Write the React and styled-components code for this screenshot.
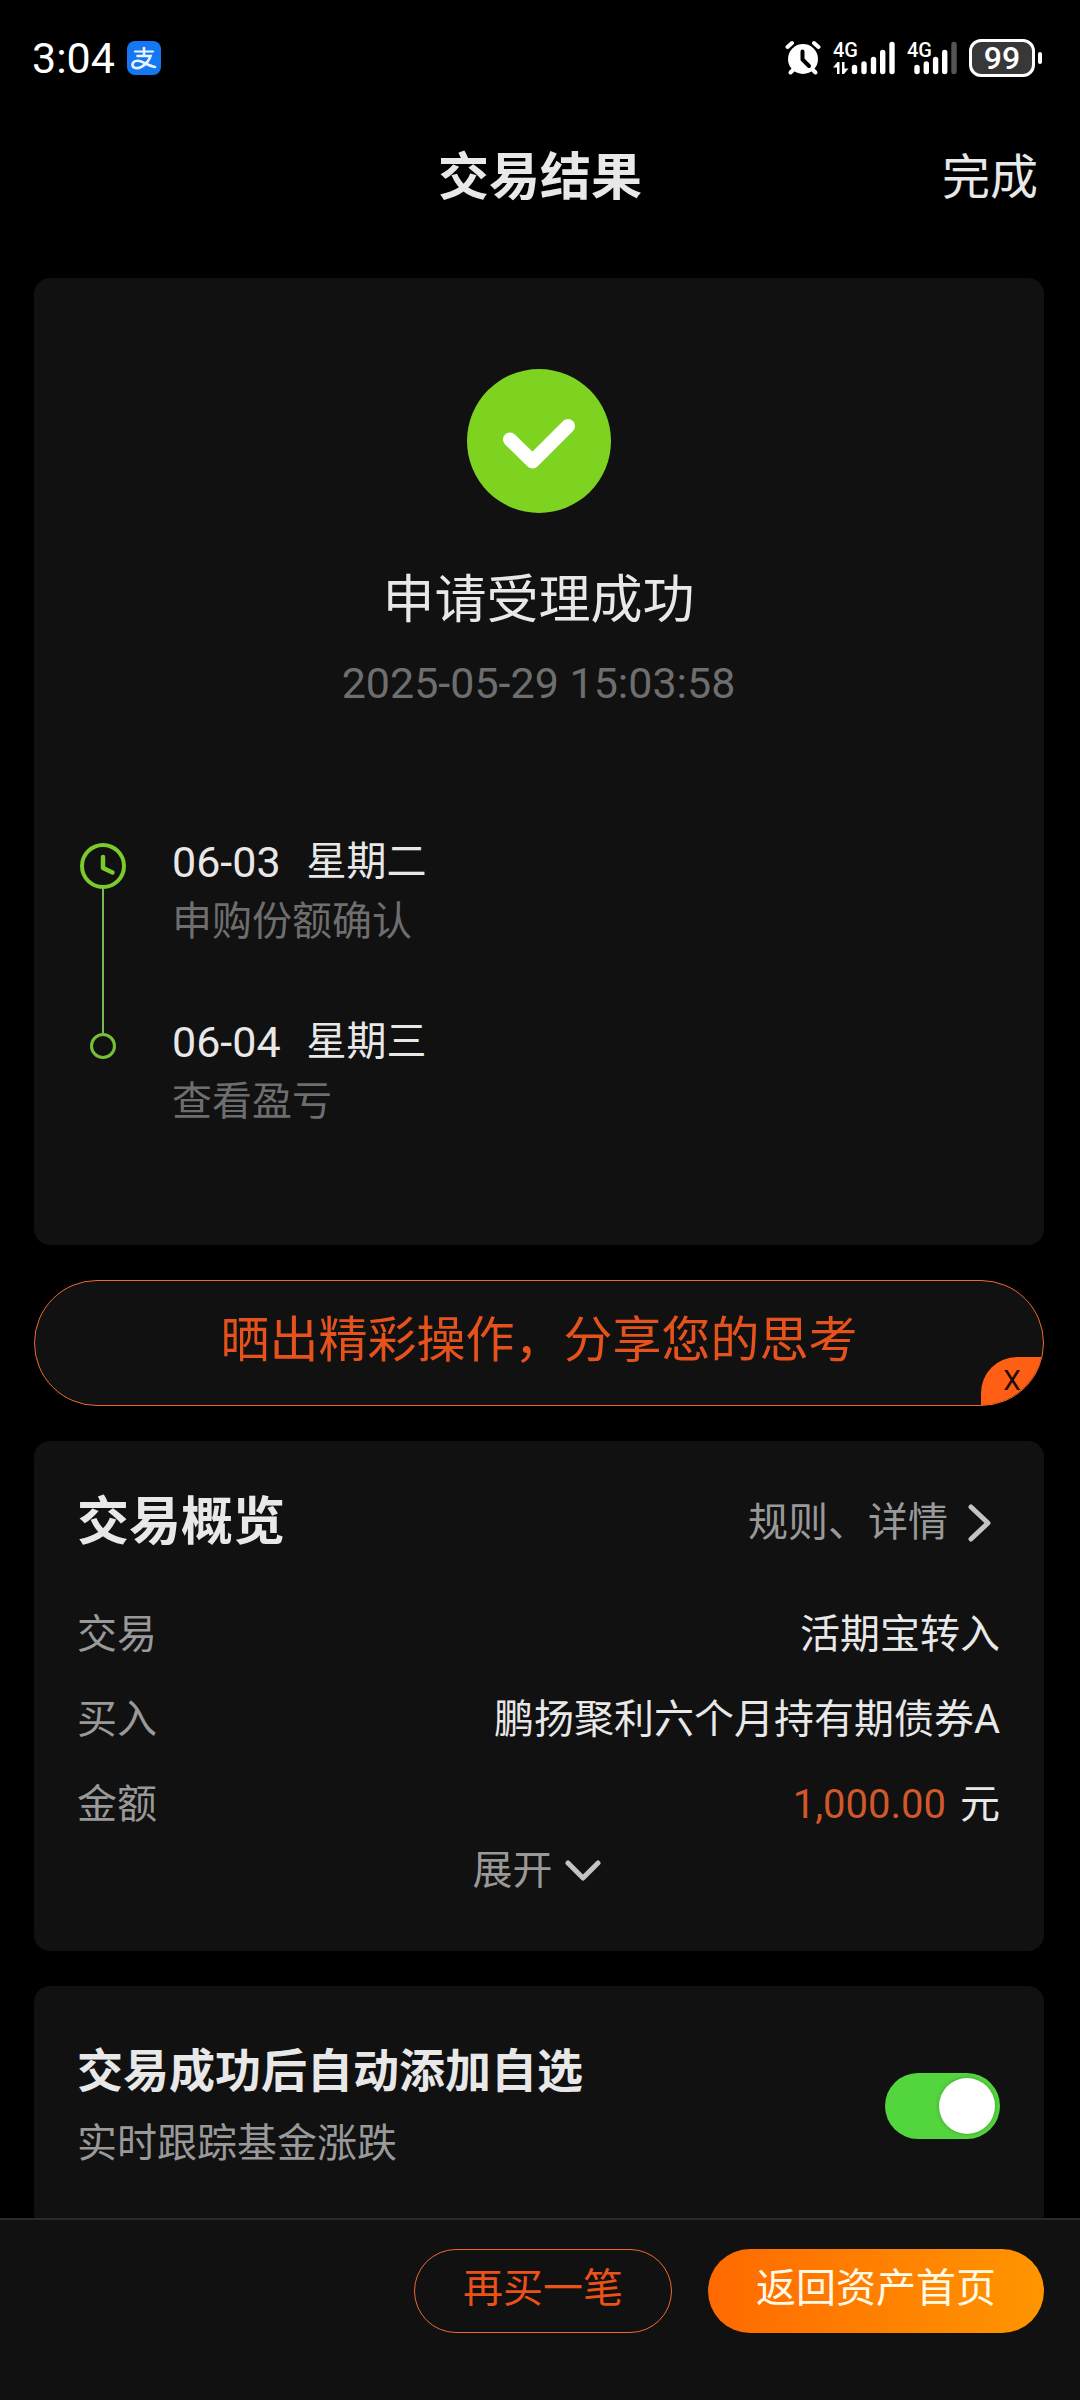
import React, { useState } from "react";
import styled, { createGlobalStyle } from "styled-components";

const steps = [
  { date: "06-03", weekday: "星期二", note: "申购份额确认", current: true },
  { date: "06-04", weekday: "星期三", note: "查看盈亏", current: false },
];

const Signal = ({ weak, data }) => (
  <SignalIcon viewBox={weak ? "0 -6 50 48" : "0 -6 62 48"} $weak={weak} aria-hidden="true">
    <text x="0" y="17" fill="#fff" fontSize="20" fontWeight="500">4G</text>
    {data && (
      <path
        d="M0 27.5 L4.5 22 H6.5 V34 H4 V27.5 Z M9 22 H11.5 V28.5 H15.5 L11 34 H9 Z"
        fill="#fff"
      />
    )}
    <g strokeWidth="5.4" strokeLinecap="round" stroke="#fff">
      <path d={data ? "M21.5 27.5V31.5" : "M10 27.5V31.5"} />
      <path d={data ? "M31 24V31.5" : "M19.3 24V31.5"} />
      <path d={data ? "M40.5 19.5V31.5" : "M28.6 19.5V31.5"} />
      <path d={data ? "M49.7 12.5V31.5" : "M37.7 12.5V31.5"} />
      <path d={data ? "M59 4.5V31.5" : "M47 4.5V31.5"} stroke={weak ? "#555" : "#fff"} />
    </g>
  </SignalIcon>
);

const App = () => {
  const [autoAdd, setAutoAdd] = useState(true);
  const [showBanner, setShowBanner] = useState(true);

  return (
    <Page>
      <GlobalStyle />

      <StatusBar>
        <StatusGroup>
          <Time>3:04</Time>
          <AppBadge viewBox="0 0 34 34" aria-hidden="true">
            <rect width="34" height="34" rx="8" fill="#1677f2" />
            <g fill="none" stroke="#e8f4ff" strokeLinecap="round">
              <path d="M17 7V14" strokeWidth="2.6" />
              <path d="M8 10.5H26" strokeWidth="2.2" />
              <path d="M10.5 15H23.5C22 19.5 18.5 23.5 14.5 25.8C10.5 28 5.5 27.5 5.5 23.8C5.5 20.2 10 18.6 14.5 20.6C18.5 22.4 23 25 28 26" strokeWidth="2.6" />
            </g>
          </AppBadge>
        </StatusGroup>
        <StatusGroup>
          <AlarmIcon viewBox="0 0 36 36" aria-hidden="true">
            <circle cx="18" cy="19" r="15" fill="#fff" />
            <g stroke="#fff" strokeWidth="4" strokeLinecap="round">
              <path d="M2.5 7 L7 3" />
              <path d="M33.5 7 L29 3" />
              <path d="M5.5 32.5 L9 29" />
              <path d="M30.5 32.5 L27 29" />
            </g>
            <path d="M17.5 11.5 V19.5 L24 26" fill="none" stroke="#000" strokeWidth="4" strokeLinecap="round" strokeLinejoin="round" />
          </AlarmIcon>
          <Signal data />
          <Signal weak />
          <Battery>99</Battery>
        </StatusGroup>
      </StatusBar>

      <Header>
        <PageTitle>交易结果</PageTitle>
        <DoneButton type="button">完成</DoneButton>
      </Header>

      <Content>
        <ResultCard>
          <SuccessIcon viewBox="0 0 144 144" aria-hidden="true">
            <circle cx="72" cy="72" r="72" fill="#7ed321" />
            <path d="M43 70.5 L65.5 92.5 L101 57" fill="none" stroke="#fff" strokeWidth="14" strokeLinecap="round" strokeLinejoin="round" />
          </SuccessIcon>
          <ResultText>申请受理成功</ResultText>
          <ResultTime>2025-05-29 15:03:58</ResultTime>

          <Timeline>
            {steps.map((step) => (
              <Step key={step.date} $current={step.current}>
                <Rail $current={step.current}>
                  {step.current ? (
                    <>
                      <ClockIcon viewBox="0 0 46 46" aria-hidden="true">
                        <circle cx="23" cy="23" r="21" fill="none" stroke="#7bcb2a" strokeWidth="4" />
                        <path d="M23 14V25L32.5 29.5" fill="none" stroke="#7bcb2a" strokeWidth="4.5" strokeLinecap="round" strokeLinejoin="round" />
                      </ClockIcon>
                      <RailLine />
                    </>
                  ) : (
                    <>
                      <RailStub />
                      <Dot />
                    </>
                  )}
                </Rail>
                <StepBody>
                  <StepDate>
                    <DateNumber>{step.date}</DateNumber>
                    <span>{step.weekday}</span>
                  </StepDate>
                  <StepNote>{step.note}</StepNote>
                </StepBody>
              </Step>
            ))}
          </Timeline>
        </ResultCard>

        {showBanner && (
          <Banner>
            <ShareButton type="button">晒出精彩操作，分享您的思考</ShareButton>
            <CloseButton type="button" onClick={() => setShowBanner(false)}>X</CloseButton>
          </Banner>
        )}

        <OverviewCard>
          <CardHeader>
            <CardTitle>交易概览</CardTitle>
            <RulesLink href="#rules">
              规则、详情
              <ChevronRight viewBox="0 0 24 38" aria-hidden="true">
                <path d="M3 3 L20 19 L3 35" />
              </ChevronRight>
            </RulesLink>
          </CardHeader>
          <Details>
            <DetailRow>
              <Label>交易</Label>
              <Value>活期宝转入</Value>
            </DetailRow>
            <DetailRow>
              <Label>买入</Label>
              <Value>鹏扬聚利六个月持有期债券A</Value>
            </DetailRow>
            <DetailRow>
              <Label>金额</Label>
              <Value>
                <Amount>1,000.00</Amount>
                <span>元</span>
              </Value>
            </DetailRow>
          </Details>
          <ExpandButton type="button">
            展开
            <ChevronDown viewBox="0 0 36 22" aria-hidden="true">
              <path d="M3 3 L18 18 L33 3" />
            </ChevronDown>
          </ExpandButton>
        </OverviewCard>

        <FavoriteCard>
          <FavoriteText htmlFor="auto-add">
            <FavoriteTitle>交易成功后自动添加自选</FavoriteTitle>
            <FavoriteNote>实时跟踪基金涨跌</FavoriteNote>
          </FavoriteText>
          <Switch
            id="auto-add"
            type="checkbox"
            checked={autoAdd}
            onChange={(e) => setAutoAdd(e.target.checked)}
          />
        </FavoriteCard>
      </Content>

      <Footer>
        <OutlineButton type="button">再买一笔</OutlineButton>
        <PrimaryButton type="button">返回资产首页</PrimaryButton>
      </Footer>
    </Page>
  );
};

// --- STYLES (dark theme) ---

const GlobalStyle = createGlobalStyle`
  * {
    box-sizing: border-box;
  }

  body {
    margin: 0;
    background: #000;
  }

  body, button, input {
    font-family: Roboto, "Noto Sans CJK SC", sans-serif;
  }

  button {
    padding: 0;
    border: none;
    background: none;
    cursor: pointer;
  }
`;

const Page = styled.div`
  height: 100vh;
  display: flex;
  flex-direction: column;
  color: #e8e8e8;
  font-size: 40px;
  line-height: 56px;
`;

const StatusBar = styled.div`
  display: flex;
  justify-content: space-between;
  align-items: center;
  padding: 30px 38px 30px 32px;
  color: #fff;
`;

const StatusGroup = styled.div`
  display: flex;
  align-items: center;
  gap: 12px;
`;

const Time = styled.span`
  font-size: 43px;
`;

const AppBadge = styled.svg`
  width: 34px;
  height: 34px;
`;

const AlarmIcon = styled.svg`
  width: 36px;
  height: 36px;
`;

const SignalIcon = styled.svg`
  width: ${(props) => (props.$weak ? "50px" : "62px")};
  height: 48px;
`;

const Battery = styled.span`
  position: relative;
  width: 66px;
  margin-right: 7px;
  border: 3px solid #fff;
  border-radius: 12px;
  background: #383838;
  font-size: 32px;
  font-weight: 500;
  line-height: 32px;
  text-align: center;

  &::after {
    content: "";
    position: absolute;
    top: 10px;
    right: -10px;
    width: 4px;
    height: 12px;
    border-radius: 2px;
    background: #fff;
  }
`;

const Header = styled.header`
  display: grid;
  grid-template-columns: 1fr auto 1fr;
  align-items: center;
  padding: 26px 42px;
`;

const PageTitle = styled.h1`
  grid-column: 2;
  margin: 0;
  font-size: 51px;
  font-weight: 700;
  line-height: 72px;
`;

const DoneButton = styled.button`
  justify-self: end;
  color: #e8e8e8;
  font-size: 48px;
  line-height: 72px;
`;

const Content = styled.main`
  flex: 1;
  min-height: 0;
  overflow-y: auto;
  scrollbar-width: none;
  display: flex;
  flex-direction: column;
  gap: 35px;
  padding: 38px 36px 35px 34px;

  & > * {
    flex-shrink: 0;
  }
`;

const Card = styled.section`
  border-radius: 16px;
  background: #111;
`;

const ResultCard = styled(Card)`
  display: flex;
  flex-direction: column;
  align-items: center;
  padding: 91px 46px 115px 45px;
`;

const SuccessIcon = styled.svg`
  width: 144px;
  height: 144px;
`;

const ResultText = styled.h2`
  margin: 52px 0 0;
  font-size: 52px;
  font-weight: 400;
  line-height: 72px;
`;

const ResultTime = styled.time`
  margin-top: 18px;
  color: #6e6e6e;
  font-size: 43px;
`;

const Timeline = styled.ol`
  align-self: stretch;
  margin: 123px 0 0;
  padding: 0;
  list-style: none;
`;

const Step = styled.li`
  display: flex;
  gap: 45px;
  min-height: ${(props) => (props.$current ? "180px" : "0")};
`;

const Rail = styled.div`
  display: flex;
  flex-direction: column;
  align-items: center;
  width: 48px;
  padding-top: ${(props) => (props.$current ? "9px" : "0")};
`;

const ClockIcon = styled.svg`
  width: 46px;
  height: 46px;
`;

const RailLine = styled.span`
  flex: 1;
  width: 2px;
  background: #78b850;
`;

const RailStub = styled.span`
  width: 2px;
  height: 19px;
  background: #78b850;
`;

const Dot = styled.span`
  width: 26px;
  height: 26px;
  border: 3px solid #76c035;
  border-radius: 50%;
`;

const StepBody = styled.div`
  display: flex;
  flex-direction: column;
  gap: 4px;
`;

const StepDate = styled.div`
  display: flex;
  gap: 26px;
`;

const DateNumber = styled.span`
  font-size: 43px;
`;

const StepNote = styled.div`
  color: #6e6e6e;
`;

const Banner = styled.div`
  position: relative;
  overflow: hidden;
  border: 1px solid #f0682f;
  border-radius: 63px;
  background: #111;
`;

const ShareButton = styled.button`
  display: block;
  width: 100%;
  padding: 24px 0 28px;
  color: #e5521c;
  font-size: 49px;
  line-height: 72px;
`;

const CloseButton = styled.button`
  position: absolute;
  right: 0;
  bottom: 0;
  width: 62px;
  height: 48px;
  border-top-left-radius: 36px;
  background: #ff5f14;
  color: #220b02;
  font-size: 28px;
  line-height: 48px;
`;

const OverviewCard = styled(Card)`
  padding: 46px 44px 56px 43px;
`;

const CardHeader = styled.div`
  display: flex;
  justify-content: space-between;
  align-items: center;
  margin-bottom: 33px;
`;

const CardTitle = styled.h2`
  margin: 0;
  font-size: 52px;
  font-weight: 700;
  line-height: 72px;
`;

const RulesLink = styled.a`
  display: flex;
  align-items: center;
  gap: 20px;
  padding-right: 8px;
  color: #999;
  text-decoration: none;
`;

const Chevron = styled.svg`
  fill: none;
  stroke: #c4c4c4;
  stroke-width: 5px;
  stroke-linecap: round;
  stroke-linejoin: round;
`;

const ChevronRight = styled(Chevron)`
  width: 24px;
  height: 38px;
`;

const ChevronDown = styled(Chevron)`
  width: 36px;
  height: 22px;
`;

const Details = styled.dl`
  margin: 0;
`;

const DetailRow = styled.div`
  display: flex;
  justify-content: space-between;
  line-height: 85px;
`;

const Label = styled.dt`
  color: #999;
`;

const Value = styled.dd`
  display: flex;
  gap: 14px;
  margin: 0;
`;

const Amount = styled.span`
  color: #d0582a;
`;

const ExpandButton = styled.button`
  display: flex;
  align-items: center;
  gap: 12px;
  margin: 0 auto;
  padding-right: 4px;
  color: #999;
  font-size: 40px;
  line-height: 48px;
`;

const FavoriteCard = styled(Card)`
  display: flex;
  justify-content: space-between;
  align-items: center;
  padding: 53px 44px 57px 43px;
`;

const FavoriteText = styled.label`
  display: flex;
  flex-direction: column;
  gap: 13px;
`;

const FavoriteTitle = styled.span`
  font-size: 46px;
  font-weight: 700;
  line-height: 64px;
`;

const FavoriteNote = styled.span`
  color: #999;
`;

const Switch = styled.input`
  appearance: none;
  display: flex;
  align-items: center;
  justify-content: ${(props) => (props.checked ? "flex-end" : "flex-start")};
  width: 115px;
  height: 66px;
  margin: 0;
  padding: 0 5px;
  border-radius: 33px;
  background: ${(props) => (props.checked ? "#53d53e" : "#444")};
  cursor: pointer;

  &::before {
    content: "";
    width: 56px;
    height: 56px;
    border-radius: 50%;
    background: #fff;
    box-shadow: 0 0 4px rgba(0, 0, 0, 0.25);
  }
`;

const Footer = styled.footer`
  display: flex;
  justify-content: flex-end;
  gap: 36px;
  padding: 29px 36px 67px;
  border-top: 2px solid #2a2a2a;
  background: #111;
`;

const RoundButton = styled.button`
  height: 84px;
  border-radius: 42px;
  font-size: 40px;
  line-height: 56px;
`;

const OutlineButton = styled(RoundButton)`
  padding: 0 48px 4px;
  border: 1px solid #f0682f;
  color: #ea5218;
`;

const PrimaryButton = styled(RoundButton)`
  padding: 0 48px 4px;
  background: linear-gradient(90deg, #ff6a00, #ff9500);
  color: #fffae6;
`;

export default App;
